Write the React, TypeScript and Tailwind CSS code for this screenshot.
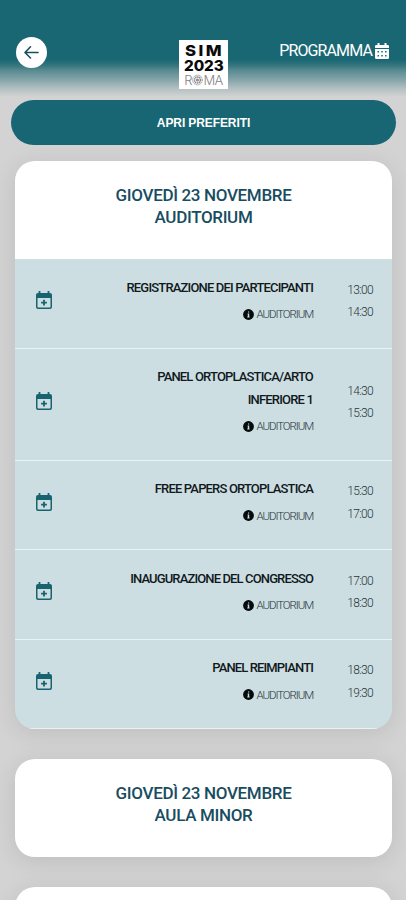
import React from 'react';

type Session = { title: string[]; room: string; start: string; end: string; spacing: string };

const sessions: Session[] = [
  { title: ['REGISTRAZIONE DEI PARTECIPANTI'], room: 'AUDITORIUM', start: '13:00', end: '14:30', spacing: 'tracking-[-0.83px]' },
  { title: ['PANEL ORTOPLASTICA/ARTO', 'INFERIORE 1'], room: 'AUDITORIUM', start: '14:30', end: '15:30', spacing: 'tracking-[-0.83px]' },
  { title: ['FREE PAPERS ORTOPLASTICA'], room: 'AUDITORIUM', start: '15:30', end: '17:00', spacing: 'tracking-[-0.83px]' },
  { title: ['INAUGURAZIONE DEL CONGRESSO'], room: 'AUDITORIUM', start: '17:00', end: '18:30', spacing: 'tracking-[-0.87px]' },
  { title: ['PANEL REIMPIANTI'], room: 'AUDITORIUM', start: '18:30', end: '19:30', spacing: 'tracking-[-0.87px]' },
];

function BackIcon() {
  return (
    <svg className="h-4 w-4" viewBox="0 0 16 16" fill="none" stroke="#17505d" strokeWidth="1.6" strokeLinecap="round" strokeLinejoin="round">
      <path d="M14 7.500H1.500M6.500 1.800 1 7.500 6.500 13" />
    </svg>
  );
}

function ProgramIcon() {
  return (
    <svg className="h-4 w-[14px]" viewBox="0 0 14 16" fill="#fff">
      <path d="M2.500 0h2v2h5V0h2v2h1.200A1.300 1.300 0 0 1 14 3.300V5H0V3.300A1.300 1.300 0 0 1 1.300 2h1.200z" />
      <path fillRule="evenodd" d="M0 6h14v8.700a1.300 1.300 0 0 1-1.300 1.300H1.300A1.300 1.300 0 0 1 0 14.700zM2.500 8v1.500h1.500v-1.500zm3.750 0v1.500h1.500v-1.500zm3.750 0v1.500h1.500v-1.500zM2.500 12v1.500h1.500v-1.500zm3.750 0v1.500h1.500v-1.500zm3.750 0v1.500h1.500v-1.500z" />
    </svg>
  );
}

function AddToCalendarIcon() {
  return (
    <svg className="h-[18px] w-4" viewBox="0 0 16 18" fill="#17636f">
      <path d="M2.600 0h1.800v2h7.200V0h1.800v2H14a2 2 0 0 1 2 2v3H0V4a2 2 0 0 1 2-2h.6z" />
      <path fillRule="evenodd" d="M0 6h16v10a2 2 0 0 1-2 2H2a2 2 0 0 1-2-2zm1.500 1v8.800c0 .4.300.7.700.7h11.600c.4 0 .7-.3.700-.7V7z" />
      <path d="M7.100 8.800h1.800v2h2v1.800h-2v2H7.100v-2h-2v-1.800h2z" />
    </svg>
  );
}

function InfoIcon() {
  return (
    <svg className="h-[11px] w-[11px]" viewBox="0 0 11 11">
      <circle cx="5.500" cy="5.500" r="5.400" fill="#050b0d" />
      <path d="M5 2.500h1.200v1.100H5zM4.600 4.500h1.600v3h.4v.9H4.300v-.9h.5v-2h-.2z" fill="#cddee2" />
    </svg>
  );
}

function RomaEmblem() {
  return (
    <svg className="h-[12px] w-[11px]" viewBox="0 0 12 12" fill="none" stroke="#858585">
      <circle cx="6" cy="6" r="5.300" strokeWidth="1" strokeDasharray="1.500 .7" />
      <circle cx="6" cy="6" r="3.300" strokeWidth="1.800" strokeDasharray="1.500 .6" />
      <circle cx="6" cy="6" r="1" strokeWidth="1.300" />
    </svg>
  );
}

function Logo() {
  return (
    <div className="flex h-[49px] w-[49px] flex-col items-center bg-white pt-[3px] font-['Inter',sans-serif] text-[#0b0b0b]">
      <span className="h-[15px] scale-x-[1.12] pl-[2px] text-[15px] leading-[15px] font-extrabold tracking-[2.2px]">SIM</span>
      <span className="h-[15px] scale-x-[1.05] text-[14.500px] leading-[15px] font-extrabold tracking-[-0.1px]">2023</span>
      <div className="flex h-[14px] items-center text-[13px] leading-[14px] font-light text-[#858585]">
        <span>R</span>
        <RomaEmblem />
        <span className="tracking-[-0.5px]">MA</span>
      </div>
    </div>
  );
}

function CardHeading({ room }: { room: string }) {
  return (
    <h2 className="h-[98px] bg-white pt-[23px] text-center text-[17px] leading-[22.400px] font-medium tracking-[-0.34px] text-[#184d61]">
      GIOVEDÌ 23 NOVEMBRE
      <br />
      {room}
    </h2>
  );
}

function SessionRow({ session }: { session: Session }) {
  return (
    <li className={`flex border-b-[1.500px] border-[#e9f3f5] pr-[19px] pl-[21px] ${session.title.length > 1 ? 'h-[112px]' : 'h-[89.500px]'}`}>
      <div className="flex flex-1 items-center pb-[6px]">
        <AddToCalendarIcon />
      </div>
      <div className="flex flex-col items-end pt-[17.500px]">
        <h3 className={`text-right text-[13px] leading-[22.500px] font-medium text-[#10191c] ${session.spacing}`}>
          {session.title.map((line) => (
            <span key={line} className="block">{line}</span>
          ))}
        </h3>
        <p className="mt-1 flex items-center gap-[3px] text-[11.500px] leading-[22px] font-light tracking-[-1.100px] text-[#26353a]">
          <InfoIcon />
          <span>{session.room}</span>
        </p>
      </div>
      <div className="flex w-[60px] flex-col justify-center pb-[4px] text-right text-[12px] leading-[22.500px] font-light tracking-[-0.7px] text-[#26353a]">
        <span>{session.start}</span>
        <span>{session.end}</span>
      </div>
    </li>
  );
}

export default function App() {
  return (
    <main className="h-[900px] w-full overflow-hidden bg-[#d3d3d3] font-['Roboto',sans-serif]">
      <header className="grid h-[100px] grid-cols-[1fr_49px_1fr] items-start bg-[linear-gradient(to_bottom,#1a6774_0px,#1a6774_60px,#39777f_66px,#578990_70px,#85a5aa_80px,#b5c1c3_89px,#d3d3d3_97px)] pr-[17px] pl-[18px]">
        <button className="mt-[37px] -ml-[2px] flex h-[31px] w-[31px] items-center justify-center rounded-full bg-white">
          <BackIcon />
        </button>
        <div className="mt-[40px]"><Logo /></div>
        <div className="mt-[42px] flex items-center justify-end gap-[3px] text-[16px] leading-[18px] tracking-[-0.880px] text-white">
          <span>PROGRAMMA</span>
          <ProgramIcon />
        </div>
      </header>
      <button className="mx-[11px] flex h-[45px] w-[385px] items-center justify-center rounded-full bg-[#186673] font-['Liberation_Sans',sans-serif] text-[12px] font-bold tracking-[-0.1px] text-white">
        APRI PREFERITI
      </button>
      <div className="flex flex-col gap-[30px] pt-4 pr-[14px] pl-[15px]">
        <section className="overflow-hidden rounded-[20px] bg-[#cddee2] shadow-[0_4px_24px_rgba(0,0,0,0.1)]">
          <CardHeading room="AUDITORIUM" />
          <ul>
            {sessions.map((session) => (
              <SessionRow key={session.start} session={session} />
            ))}
          </ul>
        </section>
        <section className="overflow-hidden rounded-[20px] shadow-[0_4px_24px_rgba(0,0,0,0.1)]">
          <CardHeading room="AULA MINOR" />
        </section>
        <section className="h-[98px] rounded-[20px] bg-white shadow-[0_4px_24px_rgba(0,0,0,0.1)]" />
      </div>
    </main>
  );
}
